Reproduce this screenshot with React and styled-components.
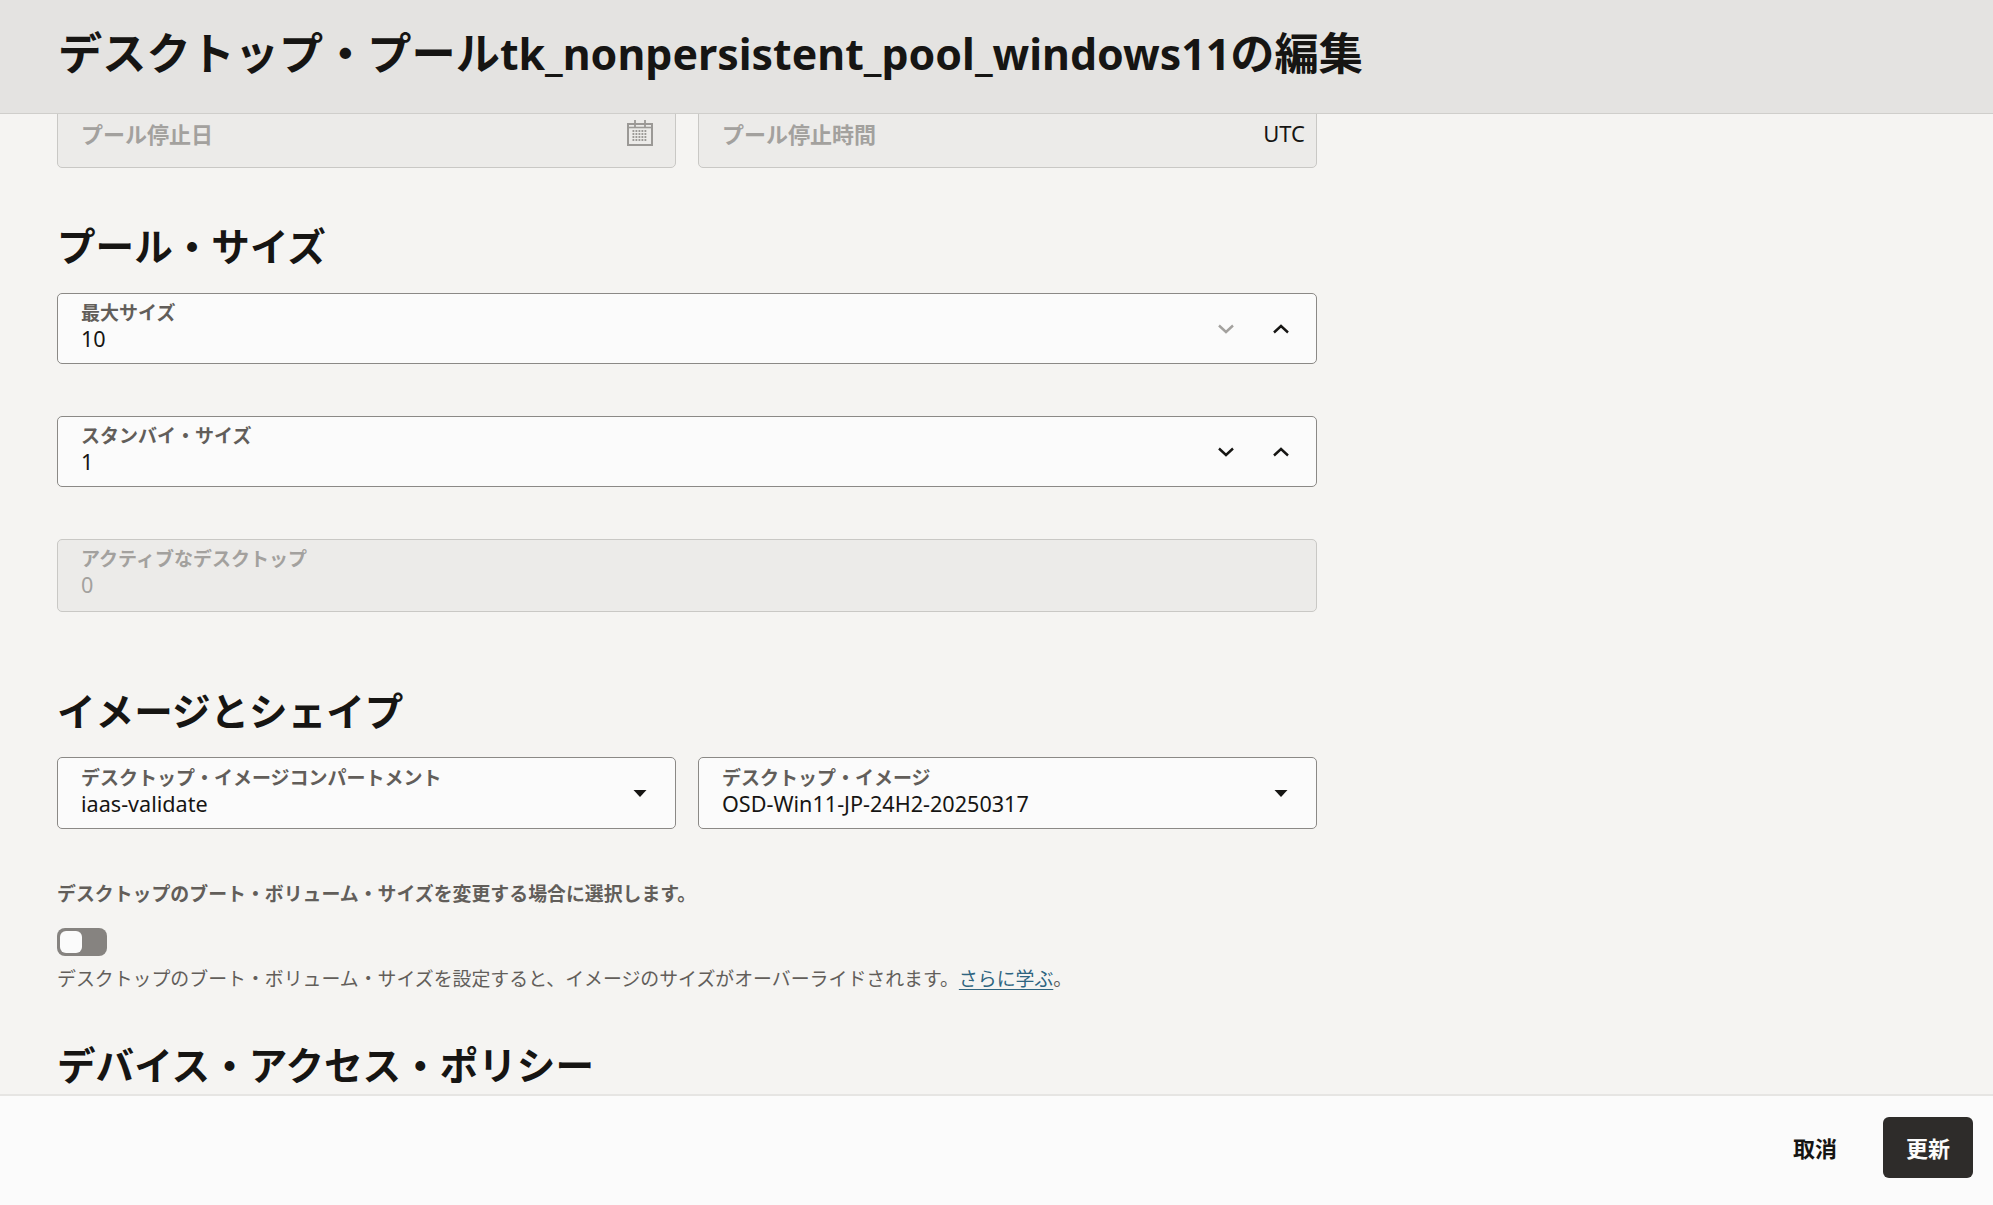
import React from "react";
import styled, { createGlobalStyle } from "styled-components";

const Global = createGlobalStyle`
  html, body { margin: 0; padding: 0; height: 100%; }
  #root { height: 100%; }
  * { box-sizing: border-box; }
  body { font-family: "Noto Sans", "Noto Sans CJK JP", sans-serif; background: #f5f4f2; color: #161513; }
`;

const Page = styled.div`
  height: 1205px;
  display: flex;
  flex-direction: column;
  overflow: hidden;
`;

const Header = styled.header`
  flex: 0 0 114px;
  height: 114px;
  background: #e4e3e1;
  border-bottom: 1px solid #cfcecb;
  padding-left: 58px;
  display: flex;
  align-items: center;
  padding-bottom: 5px;
  position: relative;
  z-index: 1;
`;

const Title = styled.h1`
  margin: 0;
  font-size: 44.2px;
  font-weight: 700;
  line-height: 1.2;
  color: #161513;
  white-space: nowrap;
`;

const TitleLatin = styled.span`
  font-size: 42.9px;
`;

const Main = styled.main`
  flex: 1;
  min-height: 0;
  overflow: hidden;
  padding: 0 57px;
  width: 1375px;
`;

const Row = styled.div`
  display: grid;
  grid-template-columns: ${(p) => (p.$cols === 2 ? "1fr 1fr" : "1fr")};
  column-gap: 22px;
  width: 1260px;
  margin-top: ${(p) => p.$mt || 0}px;
`;

const Field = styled.div`
  height: ${(p) => p.$h || 71}px;
  border: 1px solid ${(p) => (p.$disabled ? "#c9c8c5" : "#8b8986")};
  border-radius: 5px;
  background: ${(p) => (p.$disabled ? "#ecebe9" : "#fbfbfb")};
  padding: 0 11px 0 23px;
  display: flex;
  align-items: center;
  justify-content: space-between;
`;

const FieldText = styled.div`
  display: flex;
  flex-direction: column;
  min-width: 0;
  padding-bottom: ${(p) => (p.$disabled ? 6 : 4)}px;
`;

const Label = styled.div`
  font-size: 19px;
  line-height: 24px;
  font-weight: 600;
  color: ${(p) => (p.$disabled ? "#a3a19e" : "#625e5a")};
  white-space: nowrap;
`;

const Value = styled.div`
  font-size: 21.6px;
  line-height: 27px;
  color: ${(p) => (p.$disabled ? "#a3a19e" : "#161513")};
  white-space: nowrap;
`;

const Placeholder = styled.div`
  font-size: 22px;
  font-weight: 600;
  color: #a3a19e;
  white-space: nowrap;
`;

const Suffix = styled.span`
  font-size: 22px;
  color: #161513;
`;

const Icons = styled.div`
  display: flex;
  align-items: center;
  gap: 35px;
  padding-right: ${(p) => p.$pr ?? 14}px;
`;

const SectionTitle = styled.h2`
  margin: ${(p) => p.$mt || 0}px 0 0;
  font-size: 38.6px;
  line-height: 50px;
  font-weight: 700;
  color: #161513;
  white-space: nowrap;
`;

const HelpLabel = styled.div`
  margin-top: ${(p) => p.$mt || 0}px;
  font-size: 18.9px;
  line-height: 26px;
  font-weight: 700;
  color: #625e5a;
`;

const Toggle = styled.div`
  margin-top: 21px;
  width: 50px;
  height: 28px;
  border-radius: 8px;
  background: #868380;
  padding: 3px;
`;

const Knob = styled.div`
  width: 22px;
  height: 22px;
  border-radius: 6px;
  background: #fbfbfb;
`;

const HelpText = styled.div`
  margin-top: 10px;
  font-size: 18.9px;
  line-height: 26px;
  color: #625e5a;
`;

const Link = styled.a`
  color: #2e6480;
  text-decoration: underline;
  text-underline-offset: 3px;
`;

const Footer = styled.footer`
  flex: 0 0 111px;
  background: #fbfbfb;
  border-top: 2px solid #e6e5e3;
  display: flex;
  align-items: flex-start;
  justify-content: flex-end;
  padding: 21px 20px 0 0;
  gap: 24px;
`;

const Button = styled.button`
  height: 61px;
  width: ${(p) => (p.$primary ? 90 : 88)}px;
  border: none;
  border-radius: 6px;
  padding: 0 0 2px;
  font-family: inherit;
  font-size: 22px;
  font-weight: 700;
  background: ${(p) => (p.$primary ? "#2e2c2a" : "transparent")};
  color: ${(p) => (p.$primary ? "#fbfbfb" : "#161513")};
`;

const Chevron = ({ up, muted }) => (
  <svg width="20" height="20" viewBox="0 0 20 20" fill="none" aria-hidden="true">
    <path
      d={up ? "M3 13.5L10 7l7 6.5" : "M3 6.5L10 13l7-6.5"}
      stroke={muted ? "#a3a19e" : "#161513"}
      strokeWidth="2.4"
    />
  </svg>
);

const Caret = () => (
  <svg width="20" height="20" viewBox="0 0 20 20" aria-hidden="true">
    <path d="M3.5 7h13L10 14z" fill="#161513" />
  </svg>
);

const Calendar = () => (
  <svg width="26" height="26" viewBox="0 0 26 26" aria-hidden="true">
    <path d="M1 4h24v21H1z" fill="#ecebe9" stroke="#9b9996" strokeWidth="2" />
    <path d="M1 7.500h24" stroke="#9b9996" strokeWidth="1.600" />
    <path d="M8 0v7M18 0v7" stroke="#9b9996" strokeWidth="1.800" />
    <path
      d="M5.500 11h15M5.500 14h15M5.500 17h15M5.500 20h15"
      stroke="#9b9996"
      strokeWidth="1.800"
      strokeDasharray="1.800 1.200"
    />
  </svg>
);

const Spinner = ({ label, value, muted }) => (
  <Field>
    <FieldText>
      <Label>{label}</Label>
      <Value>{value}</Value>
    </FieldText>
    <Icons>
      <Chevron muted={muted} />
      <Chevron up />
    </Icons>
  </Field>
);

const SelectField = ({ label, value }) => (
  <Field $h={72}>
    <FieldText>
      <Label>{label}</Label>
      <Value>{value}</Value>
    </FieldText>
    <Icons>
      <Caret />
    </Icons>
  </Field>
);

export default function App() {
  return (
    <>
      <Global />
      <Page>
        <Header>
          <Title>
            デスクトップ・プール<TitleLatin>tk_nonpersistent_pool_windows11</TitleLatin>の編集
          </Title>
        </Header>
        <Main>
          <Row $cols={2} $mt={-17}>
            <Field $disabled>
              <Placeholder>プール停止日</Placeholder>
              <Icons $pr={11}><Calendar /></Icons>
            </Field>
            <Field $disabled>
              <Placeholder>プール停止時間</Placeholder>
              <Suffix>UTC</Suffix>
            </Field>
          </Row>
          <SectionTitle $mt={53}>プール・サイズ</SectionTitle>
          <Row $mt={22}><Spinner label="最大サイズ" value="10" muted /></Row>
          <Row $mt={52}><Spinner label="スタンバイ・サイズ" value="1" /></Row>
          <Row $mt={52}>
            <Field $disabled $h={73}>
              <FieldText $disabled>
                <Label $disabled>アクティブなデスクトップ</Label>
                <Value $disabled>0</Value>
              </FieldText>
            </Field>
          </Row>
          <SectionTitle $mt={74}>イメージとシェイプ</SectionTitle>
          <Row $cols={2} $mt={21}>
            <SelectField label="デスクトップ・イメージコンパートメント" value="iaas-validate" />
            <SelectField label="デスクトップ・イメージ" value="OSD-Win11-JP-24H2-20250317" />
          </Row>
          <HelpLabel $mt={52}>デスクトップのブート・ボリューム・サイズを変更する場合に選択します。</HelpLabel>
          <Toggle><Knob /></Toggle>
          <HelpText>
            デスクトップのブート・ボリューム・サイズを設定すると、イメージのサイズがオーバーライドされます。<Link>さらに学ぶ</Link>。
          </HelpText>
          <SectionTitle $mt={48}>デバイス・アクセス・ポリシー</SectionTitle>
        </Main>
        <Footer>
          <Button>取消</Button>
          <Button $primary>更新</Button>
        </Footer>
      </Page>
    </>
  );
}
